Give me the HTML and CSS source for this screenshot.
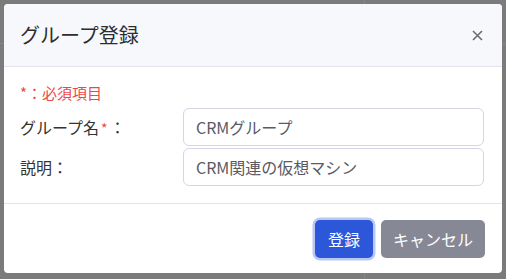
FILE: index.html
```html
<!DOCTYPE html>
<html lang="ja">
<head>
<meta charset="utf-8">
<link rel="stylesheet" href="styles.css">
</head>
<body>
<div class="modal">
  <div class="modal-header">
    <h1 class="modal-title">グループ登録</h1>
    <button class="close" aria-label="閉じる">
      <svg width="11" height="11" viewBox="0 0 11 11"><path d="M1 1L10 10M10 1L1 10" stroke="#6c6c6c" stroke-width="1.6" fill="none"/></svg>
    </button>
  </div>
  <div class="modal-body">
    <div class="required-note">*：必須項目</div>
    <div class="form-grid">
      <label class="form-label">グループ名<span class="req">*</span>：</label>
      <div class="form-input">CRMグループ</div>
      <label class="form-label">説明：</label>
      <div class="form-input">CRM関連の仮想マシン</div>
    </div>
  </div>
  <div class="modal-footer">
    <button class="btn btn-primary">登録</button>
    <button class="btn btn-secondary">キャンセル</button>
  </div>
</div>
</body>
</html>
```

FILE: styles.css
```css
html, body {
  margin: 0;
  padding: 0;
}
body {
  width: 506px;
  height: 279px;
  overflow: hidden;
  background-color: #7b7b7b;
  background-image:
    linear-gradient(to right, transparent 364px, #858585 364px, #858585 365px, transparent 365px),
    linear-gradient(to bottom, transparent 43px, #858585 43px, #858585 44px, transparent 44px);
  font-family: "Noto Sans CJK JP", "Noto Sans", sans-serif;
  color: #333;
}
.modal {
  box-sizing: border-box;
  width: 498px;
  margin: 4px 0 0 4px;
  background: #fff;
  border-radius: 4px;
  overflow: hidden;
}
.modal-header {
  height: 63px;
  box-sizing: border-box;
  background: #f7f8fc;
  border-bottom: 1px solid #e2e3ee;
  display: flex;
  align-items: center;
  justify-content: space-between;
  padding: 0 19px 0 16px;
}
.modal-title {
  margin: 0;
  font-size: 20px;
  font-weight: 400;
  color: #2e2e2e;
  line-height: 1;
}
.close {
  border: 0;
  background: none;
  padding: 0;
  width: 11px;
  height: 11px;
  display: flex;
}
.modal-body {
  padding: 15px 18px 17px 16px;
  border-bottom: 1px solid #e2e3ee;
}
.required-note {
  color: #ef4747;
  font-size: 15px;
  line-height: 22px;
  margin-bottom: 4px;
}
.form-grid {
  display: grid;
  grid-template-columns: 163px 1fr;
  row-gap: 2px;
  align-items: center;
}
.form-label {
  font-size: 16px;
  color: #333;
}
.req {
  color: #ef4747;
  font-size: 14px;
  margin: 0 2px;
}
.form-input {
  height: 38px;
  box-sizing: border-box;
  border: 1px solid #d5d5e6;
  border-radius: 6px;
  padding: 0 12px;
  display: flex;
  align-items: center;
  font-size: 16px;
  color: #5a5a64;
}
.modal-footer {
  display: flex;
  justify-content: flex-end;
  gap: 8px;
  padding: 16px 17px 15px 16px;
}
.btn {
  height: 38px;
  border: 0;
  border-radius: 5px;
  font-family: inherit;
  font-size: 16px;
  color: #fff;
  padding: 0 13px;
}
.btn-primary {
  background: #2c57d9;
  box-shadow: 0 0 0 2.5px #b9c7f2;
}
.btn-secondary {
  background: #868895;
  padding: 0 12px;
}
```
